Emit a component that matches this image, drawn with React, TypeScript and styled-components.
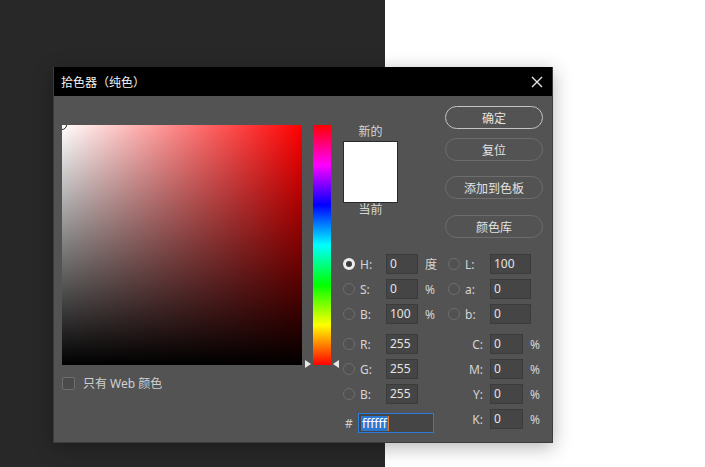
import styled, { createGlobalStyle, css } from "styled-components";

const GlobalStyle = createGlobalStyle`
  html, body {
    margin: 0;
    padding: 0;
  }
  body {
    font-family: "Noto Sans", "Noto Sans CJK SC", sans-serif;
    font-size: 12px;
  }
`;

const Desktop = styled.div`
  position: relative;
  display: flex;
  width: 705px;
  height: 467px;
  overflow: hidden;
`;

const DarkPane = styled.div`
  width: 385px;
  background: #282828;
`;

const LightPane = styled.div`
  flex: 1;
  background: #ffffff;
`;

const Dialog = styled.div`
  position: absolute;
  left: 53px;
  top: 67px;
  width: 500px;
  height: 376px;
  box-sizing: border-box;
  border: 1px solid #3c3c3c;
  border-top: none;
  background: #535353;
  box-shadow: 0 4px 18px rgba(0, 0, 0, 0.3);
  color: #d4d4d4;
  display: flex;
  flex-direction: column;
`;

const TitleBar = styled.div`
  height: 29px;
  background: #000;
  display: flex;
  align-items: center;
  justify-content: space-between;
  padding: 0 9px 0 7px;
  color: #f2f2f2;
  font-size: 12px;
`;

const Body = styled.div`
  display: flex;
  padding: 10px 0 0 8px;
`;

const LeftCol = styled.div`
  margin-top: 19px;
  display: flex;
  flex-direction: column;
`;

const Field = styled.div`
  position: relative;
  width: 240px;
  height: 240px;
  overflow: hidden;
  background: linear-gradient(to top, #000, rgba(0, 0, 0, 0)),
    linear-gradient(to right, #fff, #f00);
`;

const Marker = styled.div`
  position: absolute;
  left: -5px;
  top: -5px;
  width: 8px;
  height: 8px;
  border-radius: 50%;
  border: 1px solid #222;
  box-shadow: inset 0 0 0 1px #fff;
`;

const WebRow = styled.label`
  display: flex;
  align-items: center;
  gap: 8px;
  margin-top: 9px;
  color: #d0d0d0;
`;

const Checkbox = styled.span`
  width: 11px;
  height: 11px;
  border: 1px solid #6e6e6e;
  border-radius: 2px;
  background: #4b4b4b;
`;

const HueWrap = styled.div`
  position: relative;
  margin: 19px 0 0 11px;
  width: 18px;
  height: 240px;
`;

const HueStrip = styled.div`
  width: 100%;
  height: 100%;
  background: linear-gradient(
    to bottom,
    #ff0000 0%,
    #ff00ff 16.66%,
    #0000ff 33.33%,
    #00ffff 50%,
    #00ff00 66.66%,
    #ffff00 83.33%,
    #ff0000 100%
  );
`;

const Arrow = styled.span<{ $side: "left" | "right" }>`
  position: absolute;
  bottom: -3px;
  width: 0;
  height: 0;
  border-top: 4px solid transparent;
  border-bottom: 4px solid transparent;
  ${(p) =>
    p.$side === "left"
      ? css`
          left: -8px;
          border-left: 6px solid #e8e8e8;
        `
      : css`
          right: -8px;
          border-right: 6px solid #e8e8e8;
        `}
`;

const RightArea = styled.div`
  margin-left: 12px;
  display: flex;
  flex-direction: column;
`;

const TopRow = styled.div`
  display: flex;
  gap: 47px;
`;

const SwatchCol = styled.div`
  margin-top: 19px;
  width: 55px;
  display: flex;
  flex-direction: column;
  align-items: center;
`;

const SwatchLabel = styled.div`
  height: 16px;
  line-height: 14px;
  color: #d6d6d6;
`;

const Swatch = styled.div`
  width: 53px;
  height: 60px;
  border: 1px solid #2a2a2a;
  background: #fff;
`;

const Buttons = styled.div`
  display: flex;
  flex-direction: column;
  width: 98px;
`;

const Button = styled.button<{ $primary?: boolean; $gap: number }>`
  margin-top: ${(p) => p.$gap}px;
  height: 23px;
  border-radius: 12px;
  background: #535353;
  color: #e2e2e2;
  font-family: inherit;
  font-size: 12px;
  padding: 0;
  box-sizing: border-box;
  border: ${(p) => (p.$primary ? "1.5px solid #c4c4c4" : "1px solid #6d6d6d")};
`;

const Fields = styled.div`
  display: flex;
  margin-top: 16px;
`;

const FieldCol = styled.div<{ $width: number }>`
  width: ${(p) => p.$width}px;
  display: flex;
  flex-direction: column;
`;

const Row = styled.div<{ $gap?: number }>`
  display: flex;
  align-items: center;
  height: 20px;
  margin-top: ${(p) => p.$gap ?? 5}px;
  &:first-child {
    margin-top: 0;
  }
`;

const Radio = styled.span<{ $on?: boolean }>`
  width: 12px;
  height: 12px;
  box-sizing: border-box;
  border-radius: 50%;
  flex: none;
  ${(p) =>
    p.$on
      ? css`
          background: #3c3c3c;
          border: 3px solid #ececec;
        `
      : css`
          border: 1px solid #6e6e6e;
          background: #515151;
        `}
`;

const Label = styled.span<{ $width: number; $right?: boolean }>`
  width: ${(p) => p.$width}px;
  margin-left: 5px;
  margin-right: ${(p) => (p.$right ? 7 : 0)}px;
  color: #d4d4d4;
  text-align: ${(p) => (p.$right ? "right" : "left")};
`;

const Input = styled.div<{ $width: number }>`
  width: ${(p) => p.$width}px;
  height: 20px;
  box-sizing: border-box;
  background: #454545;
  border: 1px solid #3b3b3b;
  padding-left: 3px;
  line-height: 18px;
  color: #e4e4e4;
`;

const Unit = styled.span`
  margin-left: 7px;
  color: #d4d4d4;
`;

const Hash = styled.span`
  width: 13px;
  padding-left: 2px;
  color: #d0d0d0;
`;

const HexInput = styled.div`
  width: 76px;
  height: 20px;
  box-sizing: border-box;
  border: 1px solid #2b7bd8;
  background: #454545;
  padding: 1px 2px;
  display: flex;
  align-items: center;
`;

const Selected = styled.span`
  background: #2b78d4;
  color: #fff;
  line-height: 15px;
  padding: 0 1px;
  border-right: 1px solid #e07a2a;
`;

const CloseIcon = () => (
  <svg width="12" height="12" viewBox="0 0 12 12">
    <path d="M1 1 L11 11 M11 1 L1 11" stroke="#e6e6e6" strokeWidth="1.4" />
  </svg>
);

type FieldRow = {
  key: string;
  value: string;
  unit?: string;
  on?: boolean;
  gap?: number;
};

const hsb: FieldRow[] = [
  { key: "H:", value: "0", unit: "度", on: true },
  { key: "S:", value: "0", unit: "%" },
  { key: "B:", value: "100", unit: "%" },
  { key: "R:", value: "255", gap: 10 },
  { key: "G:", value: "255" },
  { key: "B:", value: "255" },
];

const lab: FieldRow[] = [
  { key: "L:", value: "100" },
  { key: "a:", value: "0" },
  { key: "b:", value: "0" },
];

const cmyk: FieldRow[] = [
  { key: "C:", value: "0", gap: 10 },
  { key: "M:", value: "0" },
  { key: "Y:", value: "0" },
  { key: "K:", value: "0" },
];

export default function App() {
  return (
    <>
      <GlobalStyle />
      <Desktop>
        <DarkPane />
        <LightPane />
        <Dialog>
          <TitleBar>
            <span>拾色器（纯色）</span>
            <CloseIcon />
          </TitleBar>
          <Body>
            <LeftCol>
              <Field>
                <Marker />
              </Field>
              <WebRow>
                <Checkbox />
                <span>只有 Web 颜色</span>
              </WebRow>
            </LeftCol>
            <HueWrap>
              <HueStrip />
              <Arrow $side="left" />
              <Arrow $side="right" />
            </HueWrap>
            <RightArea>
              <TopRow>
                <SwatchCol>
                  <SwatchLabel>新的</SwatchLabel>
                  <Swatch />
                  <SwatchLabel>当前</SwatchLabel>
                </SwatchCol>
                <Buttons>
                  <Button $primary $gap={0}>确定</Button>
                  <Button $gap={9}>复位</Button>
                  <Button $gap={15}>添加到色板</Button>
                  <Button $gap={16}>颜色库</Button>
                </Buttons>
              </TopRow>
              <Fields>
                <FieldCol $width={105}>
                  {hsb.map((r, i) => (
                    <Row key={i} $gap={r.gap}>
                      <Radio $on={r.on} />
                      <Label $width={26}>{r.key}</Label>
                      <Input $width={32}>{r.value}</Input>
                      {r.unit && <Unit>{r.unit}</Unit>}
                    </Row>
                  ))}
                  <Row $gap={9}>
                    <Hash>#</Hash>
                    <HexInput>
                      <Selected>ffffff</Selected>
                    </HexInput>
                  </Row>
                </FieldCol>
                <FieldCol $width={104}>
                  {lab.map((r, i) => (
                    <Row key={i}>
                      <Radio />
                      <Label $width={25}>{r.key}</Label>
                      <Input $width={41}>{r.value}</Input>
                    </Row>
                  ))}
                  {cmyk.map((r, i) => (
                    <Row key={i} $gap={r.gap}>
                      <Label $width={30} $right>
                        {r.key}
                      </Label>
                      <Input $width={33}>{r.value}</Input>
                      <Unit>%</Unit>
                    </Row>
                  ))}
                </FieldCol>
              </Fields>
            </RightArea>
          </Body>
        </Dialog>
      </Desktop>
    </>
  );
}
